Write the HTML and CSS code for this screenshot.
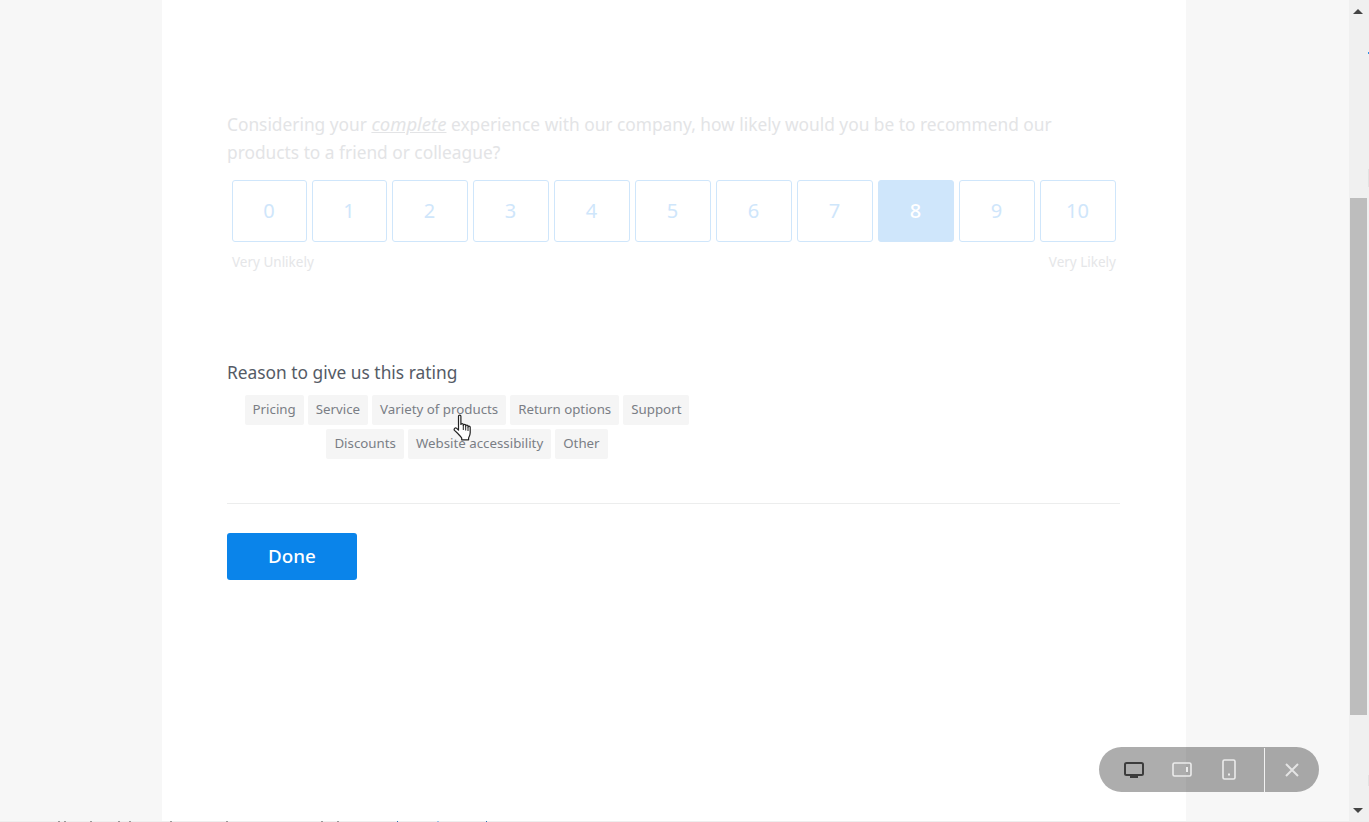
FILE: index.html
```html
<!DOCTYPE html>
<html lang="en">
<head>
<meta charset="utf-8">
<title>Survey</title>
<link rel="stylesheet" href="styles.css">
</head>
<body>
<main class="stage">
  <section class="panel">
    <p class="question">Considering your <em>complete</em> experience with our company, how likely would you be to recommend our products to a friend or colleague?</p>
    <div class="scale">
      <button class="score">0</button>
      <button class="score">1</button>
      <button class="score">2</button>
      <button class="score">3</button>
      <button class="score">4</button>
      <button class="score">5</button>
      <button class="score">6</button>
      <button class="score">7</button>
      <button class="score score-on">8</button>
      <button class="score">9</button>
      <button class="score">10</button>
    </div>
    <div class="anchors"><span>Very Unlikely</span><span>Very Likely</span></div>
    <h2 class="reason">Reason to give us this rating</h2>
    <div class="tags">
      <span class="tag">Pricing</span>
      <span class="tag">Service</span>
      <span class="tag">Variety of products</span>
      <span class="tag">Return options</span>
      <span class="tag">Support</span>
      <span class="tag">Discounts</span>
      <span class="tag">Website accessibility</span>
      <span class="tag">Other</span>
    </div>
    <hr class="rule">
    <button class="done">Done</button>
  </section>
</main>
<aside class="scrollbar">
  <span class="arrow arrow-up"></span>
  <span class="thumb"></span>
  <span class="arrow arrow-down"></span>
</aside>
<div class="bottom-line"></div>

<svg class="cursor" width="20" height="28" viewBox="0 0 20 28" aria-hidden="true">
  <path d="M5.5 2.2c0-1.5 2.4-1.5 2.4 0v8.3c0-1.3 2.4-1.3 2.4 0v.8c0-1.3 2.4-1.3 2.4 0v.8c0-1.2 2.3-1.2 2.3 0v.9c0-1.1 2.2-1.1 2.2.3v5.5c0 2.3-.7 3.6-1.6 5.2v1.8H8.7v-1.8c-.8-1.4-2.2-2.6-3.6-4.2L1.5 16.4c-1-1.5.7-3.2 2.2-2l1.8 1.8z" fill="#fff" stroke="#222" stroke-width="1.2" stroke-linejoin="round"/>
  <path d="M10.3 11v5M12.7 12v4.5M15 13v4" fill="none" stroke="#222" stroke-width="1"/>
</svg>

<div class="viewer-bar">
  <span class="device">
    <svg width="22" height="18" viewBox="0 0 22 18" aria-hidden="true"><rect x="2" y="2" width="18" height="12" rx="1.5" fill="none" stroke="#3c3c3c" stroke-width="2"/><rect x="7" y="14" width="8" height="3" fill="#3c3c3c"/></svg>
  </span>
  <span class="device device-tablet">
    <svg width="22" height="18" viewBox="0 0 22 18" aria-hidden="true"><rect x="2" y="2" width="18" height="13" rx="1.5" fill="none" stroke="#ececec" stroke-width="1.6"/><rect x="15" y="6" width="2" height="5" fill="#ececec"/></svg>
  </span>
  <span class="device">
    <svg width="16" height="22" viewBox="0 0 16 22" aria-hidden="true"><rect x="2" y="1" width="12" height="19" rx="1.5" fill="none" stroke="#ececec" stroke-width="1.6"/><rect x="7" y="14.5" width="2" height="2" fill="#ececec"/></svg>
  </span>
  <span class="bar-sep"></span>
  <span class="bar-close">
    <svg width="16" height="16" viewBox="0 0 16 16" aria-hidden="true"><path d="M2 2l12 12M14 2L2 14" fill="none" stroke="#e4e4e4" stroke-width="2"/></svg>
  </span>
</div>
</body>
</html>
```
FILE: styles.css
```css
* { box-sizing: border-box; }
html, body { margin: 0; height: 822px; overflow: hidden; }
body {
  display: flex;
  background: #f7f7f7;
  font-family: "Noto Sans", "Open Sans", sans-serif;
  position: relative;
}
.stage { flex: 1; min-width: 0; display: flex; justify-content: center; }
.panel {
  width: 1024px;
  height: 821px;
  background: #fff;
  padding: 110px 66px 0 65px;
  margin-right: 1px;
}
.question {
  margin: 0;
  font-size: 17.32px;
  line-height: 28px;
  color: #e3e4e6;
}
.question em { font-size: 18.5px; line-height: 20px; text-decoration: underline; }
.scale {
  display: grid;
  grid-template-columns: 75px 75px repeat(9, 1fr);
  gap: 5px;
  margin: 14px 4px 0 5px;
}
.score {
  height: 62px;
  padding: 0 1px 2px 0;
  background: #fff;
  border: 1px solid #cfe6fb;
  border-radius: 3px;
  color: #cfe6fb;
  font: 400 20px "Noto Sans", sans-serif;
}
.score-on { background: #cfe6fb; color: #fff; font-weight: 500; }
.anchors {
  display: flex;
  justify-content: space-between;
  margin: 10px 4px 0 5px;
  font-size: 13.5px;
  line-height: 20px;
  color: #e5e6e8;
}
.reason {
  margin: 87px 0 0;
  font-size: 17.35px;
  font-weight: 400;
  line-height: 26px;
  color: #555b66;
}
.tags {
  display: flex;
  flex-wrap: wrap;
  justify-content: center;
  gap: 4px;
  width: 480px;
  margin-top: 10px;
}
.tag {
  height: 30px;
  padding: 0 8px;
  background: #f5f5f5;
  border-radius: 2px;
  font-size: 13.3px;
  line-height: 28px;
  color: #7a7e85;
}
.rule {
  margin: 44px 0 0;
  border: 0;
  border-top: 1px solid #eceded;
}
.done {
  display: block;
  width: 130px;
  height: 47px;
  margin-top: 29px;
  padding: 0 0 2px;
  border: 0;
  border-radius: 3px;
  background: #0a84ea;
  color: #fff;
  font: 500 18.8px "Noto Sans", sans-serif;
}
.scrollbar {
  flex: none;
  width: 20px;
  height: 822px;
  background:
    linear-gradient(#2f93e6, #2f93e6) 19px 52px/1px 2px no-repeat,
    linear-gradient(#e2e2e2, #e2e2e2) 19px 169px/1px 18px no-repeat,
    linear-gradient(#e2e2e2, #e2e2e2) 19px 775px/1px 11px no-repeat,
    #f0f0f0;
  display: flex;
  flex-direction: column;
  align-items: center;
}
.thumb { width: 17px; height: 517px; margin: 184px 2px 0 0; background: #bdbdbd; }
.arrow { width: 0; height: 0; margin-right: 2px; border-left: 5px solid transparent; border-right: 5px solid transparent; }
.arrow-up { margin-top: 9px; border-bottom: 5px solid #444; }
.arrow-down { margin-top: 93px; border-top: 5px solid #444; }
.bottom-line {
  position: absolute;
  left: 0; right: 0; bottom: 0;
  height: 1px;
  background:
    linear-gradient(#999,#999) 58px 0/2px 1px no-repeat,
    linear-gradient(#999,#999) 64px 0/2px 1px no-repeat,
    linear-gradient(#999,#999) 90px 0/2px 1px no-repeat,
    linear-gradient(#999,#999) 118px 0/2px 1px no-repeat,
    linear-gradient(#999,#999) 129px 0/2px 1px no-repeat,
    linear-gradient(#999,#999) 170px 0/2px 1px no-repeat,
    linear-gradient(#999,#999) 226px 0/2px 1px no-repeat,
    linear-gradient(#999,#999) 321px 0/2px 1px no-repeat,
    linear-gradient(#999,#999) 337px 0/2px 1px no-repeat,
    linear-gradient(#2a72b5,#2a72b5) 397px 0/1px 1px no-repeat,
    linear-gradient(#9cc3e6,#9cc3e6) 437px 0/2px 1px no-repeat,
    linear-gradient(#2a72b5,#2a72b5) 486px 0/1px 1px no-repeat,
    #eee;
}
.cursor { position: absolute; left: 453px; top: 414px; }
.viewer-bar {
  position: absolute;
  left: 1099px;
  top: 747px;
  width: 220px;
  height: 45px;
  padding-left: 11px;
  border-radius: 23px;
  background: rgba(0, 0, 0, .32);
  display: flex;
  align-items: center;
}
.device { width: 47.5px; display: flex; justify-content: center; }
.device-tablet { padding-left: 1px; }
.bar-sep { width: 1px; height: 44px; margin-left: 11px; background: #f2f2f2; }
.bar-close { flex: 1; display: flex; justify-content: center; }
```
